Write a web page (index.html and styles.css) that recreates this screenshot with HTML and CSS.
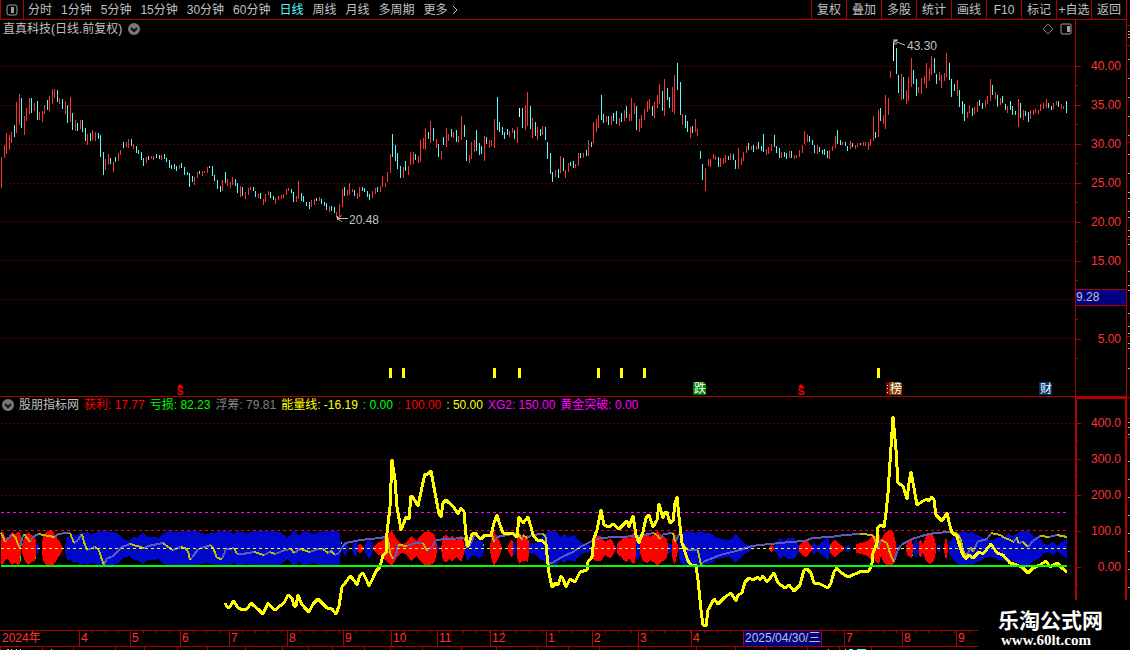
FILE: index.html
```html
<!DOCTYPE html>
<html lang="zh-CN">
<head>
<meta charset="utf-8">
<title>直真科技 日线</title>
<link rel="stylesheet" href="styles.css">
</head>
<body>
<div class="terminal">
  <header class="toolbar">
    <button class="panel-toggle" aria-label="侧栏">
      <svg width="12" height="12" viewBox="0 0 12 12"><rect x="1" y="1" width="10" height="10" rx="2" fill="none" stroke="#a0a0a0"/><path d="M5 3h3v6H5z" fill="#a0a0a0"/></svg>
    </button>
    <nav class="periods">
      <button>分时</button><button>1分钟</button><button>5分钟</button><button>15分钟</button><button>30分钟</button><button>60分钟</button><button class="active">日线</button><button>周线</button><button>月线</button><button>多周期</button><button class="more">更多<svg width="6" height="10" viewBox="0 0 6 10"><path d="M1 1l4 4-4 4" fill="none" stroke="#c0c0c0"/></svg></button>
    </nav>
    <nav class="tools">
      <button>复权</button><button>叠加</button><button>多股</button><button>统计</button><button>画线</button><button>F10</button><button>标记</button><button>+自选</button><button>返回</button>
    </nav>
  </header>

  <section class="pane price">
    <div class="plot">
      <div class="pane-title">
        <span>直真科技(日线.前复权)</span>
        <button class="round" aria-label="展开"><svg width="12" height="12" viewBox="0 0 12 12"><circle cx="6" cy="6" r="6" fill="#787878"/><path d="M3 5l3 3 3-3" fill="none" stroke="#101010" stroke-width="2"/></svg></button>
        <div class="title-icons">
          <svg width="12" height="12" viewBox="0 0 12 12"><path d="M6 1l5 5-5 5-5-5z" fill="none" stroke="#808080"/></svg>
          <svg width="12" height="12" viewBox="0 0 12 12"><rect x="1" y="1" width="10" height="10" rx="1" fill="none" stroke="#a0a0a0"/><path d="M7 3h3v6H7z" fill="#a0a0a0"/></svg>
        </div>
      </div>
      <svg class="canvas" viewBox="0 38 1075 358" preserveAspectRatio="none">
        <path class="grid" transform="translate(0 .5)" d="M1 66H1074M1 105H1074M1 144H1074M1 183H1074M1 221H1074M1 260H1074M1 299H1074M1 338H1074"/>
        <g transform="translate(.5 0)" shape-rendering="crispEdges">
          <path id="up" stroke="#ff3232"/>
          <path id="down" stroke="#54fcfc"/>
          <path stroke="#fff" d="M519 108V117M893 42V61"/>
        </g>
        <g class="callout">
          <path d="M337.500 218.500H348M337.500 218.500l4-3M337.500 218.500l4 3M337.500 216v4"/>
          <text x="349" y="224">20.48</text>
          <path d="M893.500 41l11.500 4M893 40h4M894 45v-4l4-1M895 44h2"/>
          <text x="907" y="50">43.30</text>
        </g>
        <path fill="#ff0" d="M389 368h3v10h-3zM402 368h3v10h-3zM493 368h3v10h-3zM518 368h3v10h-3zM597 368h3v10h-3zM620 368h3v10h-3zM643 368h3v10h-3zM877 368h3v10h-3z"/>
        <g class="dividend">
          <path d="M177 387l3-3 3 3zM798 387l3-3 3 3z"/>
          <text x="180" y="395">S</text><text x="801" y="395">S</text>
        </g>
        <g class="event">
          <path fill="#008000" d="M693 382h11l2 2v11h-13z"/><text x="700" y="393">跌</text>
          <path fill="#800000" d="M886 382h3v13h-3z"/><path d="M887 385h1v1h-1zM887 388h1v1h-1zM887 392h1v1h-1z" fill="#fff"/>
          <path fill="#804000" d="M889 382h11l2 2v11h-13z"/><text x="896" y="393">榜</text>
          <path fill="#003468" d="M1039 382h11l2 2v11h-13z"/><text x="1046" y="393">财</text>
        </g>
      </svg>
    </div>
    <ul class="scale">
      <li>40.00</li><li>35.00</li><li>30.00</li><li>25.00</li><li>20.00</li><li>15.00</li><li class="slot"><span class="cursor">9.28</span></li><li>5.00</li>
    </ul>
    <div class="edge"><svg viewBox="0 20 3 377" preserveAspectRatio="none"><path stroke="#b00000" d="M0 25.500h3M0 45.500h3M0 142.500h3M0 239.500h3M0 336.500h3"/><path stroke="#b0b0b0" d="M1 31.500h2M1 34.500h2M1 37.500h2M1 59.500h2M1 78.500h2M1 97.500h2M1 116.500h2M1 135.500h2M1 154.500h2M1 173.500h2M1 192.500h2M1 198.500h2M1 211.500h2M1 217.500h2M1 230.500h2M1 236.500h2M1 244.500h2M1 271.500h2M1 285.500h2M1 290.500h2M1 313.500h2M1 326.500h2M1 333.500h2M1 343.500h2M1 348.500h2M1 368.500h2"/></svg></div>
  </section>

  <section class="pane indicator">
    <div class="plot">
      <div class="legend">
        <button class="round" aria-label="指标"><svg width="12" height="12" viewBox="0 0 12 12"><circle cx="6" cy="6" r="6" fill="#787878"/><path d="M3 5l3 3 3-3" fill="none" stroke="#101010" stroke-width="2"/></svg></button>
        <span>股朋指标网</span><span class="red">获利: 17.77</span><span class="green">亏损: 82.23</span><span class="gray">浮筹: 79.81</span><span class="yellow">能量线: -16.19</span><span class="green">: 0.00</span><span class="red">: 100.00</span><span class="yellow">: 50.00</span><span class="magenta">XG2: 150.00</span><span class="magenta">黄金突破: 0.00</span>
      </div>
      <svg class="canvas" viewBox="0 413 1075 217" preserveAspectRatio="none">
        <path class="grid" transform="translate(0 .5)" d="M1 423H1074M1 459H1074M1 495H1074M1069 531H1074M1069 566H1074"/>
        <g shape-rendering="crispEdges">
          <path id="loss" fill="#0008cc"/>
          <path id="gain" fill="#f00"/>
          <path fill="#0f0" d="M20 556h1v5h-1zM35 557h1v2h-1zM341 542h1v2h-1zM483 544h1v2h-1zM830 546h1v2h-1zM912 554h1v2h-1z"/>
          <g transform="translate(0 .5)" stroke-dasharray="3 3">
            <path stroke="#f0f" d="M1 512H1067"/>
            <path stroke="#f00" d="M1 530H1067"/>
          </g>
          <path id="float" class="line" stroke="#5c5cc0"/>
          <path id="fall" class="line" stroke="#c0c000"/>
          <path transform="translate(0 .5)" stroke-dasharray="3 3" stroke="#ff0" d="M1 548H1067"/>
          <path id="energy" class="energy"/>
          <path fill="#0f0" d="M1 565H1067v2H1z"/>
          <path fill="#f0f" d="M390 566h1v1h-1zM410 566h1v1h-1zM443 566h1v1h-1zM461 566h1v1h-1zM601 566h1v1h-1zM659 566h1v1h-1zM674 566h1v1h-1zM888 566h1v1h-1zM946 566h1v1h-1z"/>
        </g>
      </svg>
    </div>
    <ul class="scale">
      <li>400.0</li><li>300.0</li><li>200.0</li><li>100.0</li><li>0.00</li>
    </ul>
    <div class="edge"><svg viewBox="0 397 3 233" preserveAspectRatio="none"><path stroke="#b00000" d="M0 397.500h3M0 418.500h3M0 437.500h3"/><path stroke="#b0b0b0" d="M1 422.500h2M1 427.500h2M1 434.500h2M1 461.500h2M1 479.500h2M1 497.500h2M1 515.500h2M1 533.500h2M1 551.500h2M1 569.500h2M1 587.500h2"/></svg></div>
  </section>

  <ol class="dates">
    <li>2024年</li><li>4</li><li>5</li><li>6</li><li>7</li><li>8</li><li>9</li><li>10</li><li>11</li><li>12</li><li>1</li><li>2</li><li>3</li><li>4</li><li class="picked"><time datetime="2025-04-30">2025/04/30/三</time></li><li>7</li><li>8</li><li>9</li>
  </ol>
  <svg class="next" viewBox="0 647 1130 3" preserveAspectRatio="none" shape-rendering="crispEdges">
    <path fill="#b00000" d="M0 647h1v3h-1zM42 647h1v3h-1zM73 647h1v3h-1zM115 647h1v3h-1zM144 647h1v3h-1zM177 647h1v3h-1zM207 647h1v3h-1zM245 647h1v3h-1zM282 647h1v3h-1zM308 647h1v3h-1zM332 647h1v3h-1zM364 647h1v3h-1zM390 647h1v3h-1zM422 647h1v3h-1zM461 647h1v3h-1zM496 647h1v3h-1zM537 647h1v3h-1zM568 647h1v3h-1zM599 647h1v3h-1zM638 647h1v3h-1zM696 647h1v3h-1zM735 647h1v3h-1zM766 647h1v3h-1zM807 647h1v3h-1zM839 647h1v3h-1zM871 647h1v3h-1z"/>
    <path fill="#c0c0c0" d="M7 649h2v1h-2zM11 649h1v1h-1zM16 649h1v1h-1zM20 649h1v1h-1zM51 649h1v1h-1zM828 649h1v1h-1z"/>
    <path fill="#54fcfc" d="M845 649h1v1h-1zM849 649h4v1h-4zM857 649h9v1h-9z"/>
  </svg>
  <div class="watermark"><strong>乐淘公式网</strong><b>www.60lt.com</b></div>
</div>
<script src="chart.js"></script>
</body>
</html>
```
FILE: styles.css
```css
* { box-sizing: border-box; }
body {
  margin: 0;
  background: #000;
  color: #c0c0c0;
  font: 12px/16px "Liberation Sans", "Noto Sans CJK SC", sans-serif;
}
button {
  margin: 0;
  padding: 0;
  border: 0;
  background: none;
  color: inherit;
  font: inherit;
  white-space: nowrap;
}
svg { display: block; }
ul, ol { margin: 0; padding: 0; list-style: none; }

.terminal {
  position: relative;
  display: flex;
  flex-direction: column;
  height: 100vh;
  min-height: 480px;
  overflow: hidden;
}

.toolbar {
  display: flex;
  flex: none;
  height: 20px;
  margin-right: 3px;
  border: solid #b00000;
  border-width: 0 1px 1px;
}
.panel-toggle {
  display: grid;
  place-items: center;
  width: 23px;
  border-right: 1px solid #b00000;
}
.periods { display: flex; gap: 9px; padding-left: 4px; }
.periods .active { color: #54fcfc; }
.periods .more { display: flex; align-items: center; gap: 4px; }
.tools { display: flex; margin-left: auto; }
.tools button { width: 35px; border-left: 1px solid #b00000; }

.pane {
  display: grid;
  grid-template-columns: minmax(0, 1fr) 52px 3px;
  min-height: 0;
}
.price { flex: 377 1 0; }
.indicator { flex: 233 1 0; }
.plot { display: flex; flex-direction: column; min-height: 0; }
.price .plot { border-bottom: 1px solid #b00000; }
.canvas { flex: 1 1 0; width: 100%; min-height: 0; }
.edge svg { width: 100%; height: 100%; }

.pane-title {
  display: flex;
  align-items: center;
  gap: 6px;
  height: 18px;
  padding: 0 3px;
}
.title-icons { display: flex; gap: 6px; margin-left: auto; }
.legend {
  display: flex;
  align-items: center;
  gap: 5px;
  height: 16px;
  padding-left: 2px;
  white-space: nowrap;
}
.red { color: #f00; }
.green { color: #0f0; }
.gray { color: #808080; }
.yellow { color: #ff0; }
.magenta { color: #f0f; }

.scale {
  color: #ff3232;
  text-align: right;
  border: solid #b00000;
}
.scale li { padding-right: 5px; background-repeat: no-repeat; background-image: linear-gradient(#b00000, #b00000), linear-gradient(#b00000, #b00000); }
.price .scale { padding-top: 27px; border-width: 0 1px 1px; }
.price .scale li {
  height: 39px;
  line-height: 39px;
  background-size: 5px 1px, 2px 1px;
  background-position: 0 19px, 0 38px;
}
.indicator .scale { padding-top: 6px; border-width: 2px 2px 0; }
.indicator .scale li {
  height: 36px;
  padding-right: 4px;
  line-height: 36px;
  background-size: 4px 1px, 1px 1px;
  background-position: 0 18px, 0 35px;
}
.price .scale .slot { padding: 8px 0 0; }
.cursor {
  display: block;
  height: 17px;
  border: solid #b00000;
  border-width: 1px 0;
  background: #000080;
  color: #c0c0c0;
  line-height: 15px;
  text-align: left;
}

.grid { stroke: #a00000; stroke-dasharray: 1 3; shape-rendering: crispEdges; }
.callout path { fill: none; stroke: #c0c0c0; }
.callout text { fill: #c0c0c0; }
.dividend { fill: #f00; font-size: 10px; font-weight: bold; text-anchor: middle; }
.event text { fill: #fff; text-anchor: middle; }
.line { fill: none; stroke-width: 2; }
.energy { fill: none; stroke: #ff0; stroke-width: 3; stroke-linejoin: round; }

.dates {
  display: grid;
  flex: none;
  grid-template-columns: 79fr 51fr 50fr 49fr 58fr 56fr 48fr 46fr 53fr 56fr 46fr 46fr 53fr 52fr 101fr 58fr 54fr 22fr 152fr;
  height: 17px;
  border: solid #b00000;
  border-width: 1px 0;
  color: #ff3232;
}
.dates li {
  min-width: 0;
  padding-left: 1px;
  border-left: 1px solid #b00000;
  line-height: 15px;
  white-space: nowrap;
  background: repeating-linear-gradient(90deg, transparent 0 12px, #b00000 12px 13px) 0 0 / 100% 2px no-repeat;
}
.dates li:first-child { border-left-color: transparent; background: none; }
.dates .picked { padding: 0; }
.picked time {
  display: inline-block;
  height: 15px;
  padding: 0 1px;
  border-right: 1px solid #b00000;
  background: #000080;
  color: #c0c0c0;
}
.next { flex: none; width: 100%; height: 3px; }

.watermark {
  position: absolute;
  right: 0;
  bottom: 0;
  display: flex;
  flex-direction: column;
  width: 152px;
  height: 50px;
  padding: 6px 0 0 20px;
  background: #000;
  color: #fff;
}
.watermark strong { font: bold 21px/26px "Noto Sans CJK SC", sans-serif; }
.watermark b { padding-left: 3px; font: bold 15px/16px "Liberation Serif", serif; }
```
FILE: chart.js
```js
// Daily bars: direction (r = up, c = down), x, high, low.
const bars = `
r1,157,188 r4,145,158 r6,133,154 r9,135,150 r11,132,143 c14,125,137 r16,102,133 r19,94,125 c21,98,128 r24,116,135
r26,108,121 r29,98,114 c31,98,113 r34,103,111 c37,101,120 r39,112,120 r42,111,122 r44,105,114 c47,100,110 r49,96,111
r52,89,104 r54,89,98 c57,90,102 r59,98,104 c62,99,109 r65,101,114 c67,105,123 r70,97,122 c72,113,130 r75,120,131
c77,123,131 r80,120,129 c82,120,132 c85,128,141 r87,134,145 c90,133,141 r92,130,140 r95,132,141 c98,133,139 c100,135,157
c103,152,175 r105,159,170 r108,154,165 c110,158,164 r113,162,172 c115,157,162 r118,153,161 r120,150,155 c123,142,148 r126,142,147
r128,139,148 c131,139,146 r133,144,149 c136,146,153 c138,150,154 c141,152,160 c143,158,166 r146,157,163 c148,156,160 r151,156,159
r153,156,160 c156,154,158 c159,155,159 r161,155,160 c164,154,159 c166,158,162 c169,160,168 c171,165,169 c174,164,169 c176,166,171
r179,165,169 c181,163,168 c184,167,175 c187,172,175 c189,173,187 c192,176,182 r194,177,185 r197,172,178 c199,171,174 r202,171,176
r204,171,173 r207,167,173 c209,166,168 c212,166,176 c214,175,181 c217,180,189 c220,186,192 r222,180,191 c225,172,183 r227,179,186
r230,182,188 r232,177,185 c235,179,186 c237,183,193 r240,186,197 c242,187,196 r245,192,199 r248,188,195 r250,187,190 c253,187,191
c255,191,197 r258,194,198 c260,193,199 r263,199,205 r265,194,202 r268,191,195 c270,192,198 c273,196,200 r275,198,204 r278,196,200
r281,195,199 r283,194,198 r286,189,195 r288,188,191 c291,189,193 c293,192,202 r296,196,202 r298,181,199 c301,193,201 c303,196,202
c306,202,206 c309,202,209 r311,200,207 r314,199,205 c316,198,201 r319,197,201 c321,199,204 c324,202,206 c326,203,210 r329,206,212
c331,206,211 c334,207,213 r336,212,218 r339,204,216 r342,189,207 c344,187,196 r347,190,196 r349,183,195 r352,189,192 c354,190,196
r357,193,199 r359,187,197 c362,187,191 c364,188,192 c367,191,197 c369,194,200 r372,191,198 r375,188,194 c377,187,192 r380,186,192
r382,176,187 r385,183,187 r387,172,182 r390,154,173 c392,134,157 c395,145,161 c397,153,169 c400,166,178 r403,167,178 c405,161,171
r408,166,175 r410,152,165 r413,152,164 c415,154,160 r418,156,163 r420,140,162 r423,138,149 r425,128,150 c428,132,139 r430,121,143
c433,128,141 r436,139,148 c438,144,157 r441,151,159 c443,137,145 r446,128,147 r448,134,141 c451,129,137 r453,132,138 c456,130,142
r458,136,143 r461,116,140 c464,125,137 c466,140,161 r469,155,163 r471,142,159 r474,140,152 c476,130,151 c479,143,155 c481,146,154
r484,136,161 c486,137,144 r489,140,148 r491,140,146 r494,119,148 c497,97,130 c499,122,132 c502,127,135 c504,132,139 c507,129,135
r509,131,137 r512,128,133 c514,130,139 r517,127,143 c522,108,128 r525,105,130 r527,92,126 c530,106,129 r532,118,138 c535,122,136
r537,127,140 c540,129,136 r542,126,135 c545,127,140 c547,142,159 c550,153,174 c552,172,182 r555,170,177 c558,169,178 r560,156,173
c563,158,171 r565,170,178 r568,163,172 c570,162,166 c573,161,168 r575,164,168 r578,153,166 c580,153,158 r583,153,158 c586,150,156
r588,140,156 c591,142,147 r593,122,143 r596,119,132 r598,115,128 c601,95,120 c603,114,123 r606,116,122 c608,116,125 r611,116,125
c613,113,121 c616,111,124 r619,118,126 c621,113,122 r624,110,121 c626,106,118 r629,114,121 r631,98,121 r634,103,114 c636,106,130
r639,119,132 r641,115,128 r644,109,120 r647,101,112 r649,99,109 c652,106,116 r654,102,118 r657,95,108 r659,84,104 c662,91,111
r664,79,116 c667,88,100 c669,97,108 r672,87,112 r674,75,114 c677,63,90 c680,82,115 r682,114,125 c685,115,128 c687,121,132
r690,127,138 c692,126,133 r695,119,132 r697,129,136 c700,151,159 c702,164,180 r705,168,191 r708,159,166 r710,159,167 r713,154,159
r715,156,160 c718,157,167 r720,158,167 r723,158,164 r725,155,163 c728,156,160 r730,153,160 c733,154,160 c735,160,169 r738,148,169
r741,158,165 r743,152,161 r746,146,153 c748,143,150 r751,146,150 c753,145,152 r756,146,150 c758,142,149 c761,146,151 c763,134,152
r766,149,155 r768,147,154 r771,144,151 c774,135,147 c776,146,153 c779,148,158 r781,152,158 c784,152,157 c786,153,159 r789,151,158
c791,151,158 r794,155,159 r796,155,158 r799,150,157 r802,145,153 r804,131,144 r807,134,142 c809,136,142 c812,140,145 c814,145,153
r817,145,154 c819,147,152 c822,150,154 c824,149,155 c827,151,158 r829,150,159 r832,146,151 r835,136,148 c837,130,144 c840,140,145
r842,142,145 c845,142,146 c847,146,151 r850,141,149 c852,143,147 r855,145,149 r857,143,147 c860,143,145 r863,142,146 r865,142,146
r868,142,150 r870,139,146 r873,116,141 c875,132,138 r878,110,137 c880,108,121 r883,115,124 r885,95,129 r888,98,115 r890,71,78
c896,48,74 c898,75,93 r901,74,100 c903,77,99 r906,90,104 r908,77,101 r911,58,87 c913,70,84 c916,79,96 r918,87,93
r921,78,94 r924,76,84 r926,63,88 r929,68,81 r931,56,75 c934,58,73 c936,74,84 r939,72,81 r941,75,88 r944,73,81
r946,53,77 c949,63,80 c951,79,97 c954,84,91 r957,80,96 c959,90,107 c962,101,114 c964,104,121 r967,112,118 r969,105,113
c972,108,116 r974,107,114 r977,102,112 c979,100,106 c982,103,109 r985,100,107 r987,96,104 r990,79,101 c992,85,95 r995,92,99
c997,95,107 r1000,98,105 c1002,96,103 c1005,104,110 r1007,106,113 c1010,101,110 c1012,106,115 c1015,111,115 r1018,99,127 c1020,103,118
r1023,110,120 c1025,111,116 c1028,112,122 r1030,110,119 r1033,110,115 r1035,109,113 r1038,110,114 r1040,104,111 r1043,103,109 r1046,99,108
c1048,103,108 c1051,106,110 r1053,103,109 r1056,101,105 c1058,101,107 r1061,104,109 r1063,106,109 c1066,101,113`;

const barPath = kind => bars.trim().split(/\s+/).filter(b => b[0] === kind)
  .map(b => b.slice(1).split(',')).map(([x, hi, lo]) => `M${x} ${hi}V${lo}`).join('');

// Chip bands: x,half-height pairs, mirrored around the 50 line.
const loss = [
  '36,0 37,5 38,6 40,0',
  '65,0 66,8 68,12 71,10 73,14 77,13 80,16 84,15 87,16 91,14 95,15 99,17 105,17 111,16 117,15 122,10 126,8 129,7 133,11 137,11 140,13 143,15 148,11 153,11 158,10 163,14 168,17 176,16 184,17 197,17 201,15 207,14 213,15 220,17 229,17 234,14 238,17 247,15 253,17 263,17 272,17 280,16 284,13 287,10 290,12 293,17 296,17 299,12 302,16 306,17 313,14 320,16 325,17 337,17 340,14 341,0',
  '342,0 344,7 346,5 349,0', '352,0 354,6 356,7 359,0', '365,0 368,10 370,8 373,0', '364,0 367,7 369,10 371,7 374,0',
  '437,4 440,0', '464,3 468,12 471,7 475,7 479,10 481,7 483,8 484,0', '513,6 515,4 517,0', '529,5 532,5 534,0',
  '533,4 537,8 542,11 545,14 548,17 553,17 558,15 560,11 564,14 567,11 572,12 575,13 578,8 582,5 587,3 592,2 594,0',
  '615,4 617,0', '635,9 638,12 641,3', '668,5 672,3',
  '679,9 681,14 684,16 690,17 695,15 700,17 707,15 712,14 717,10 722,9 728,8 732,9 735,14 740,9 743,6 748,3 755,0',
  '774,2 777,5 780,10 784,7 788,10 793,10 797,6 799,2', '812,3 814,6 817,2 822,6 827,10 829,8 830,2', '845,1 848,4 851,0',
  '896,5 899,0', '913,3 916,9 919,2', '937,2 939,4 941,0',
  '949,5 953,10 957,15 963,17 968,15 972,16 975,14 980,12 985,9 988,8 993,8 998,11 1005,12 1008,15 1012,12 1017,14 1020,17 1028,17 1032,13 1038,10 1043,5 1048,3 1053,6 1057,2 1062,6 1067,10'
];
const gain = [
  '1,15 3,17 5,11 7,10 9,12 12,16 15,14 17,16 19,16 21,12 21,0', '22,3 25,13 29,16 32,12 34,13 36,8 36,0',
  '42,5 44,14 48,17 53,17 57,10 60,6 63,0', '358,3 360,5 364,0', '373,1 377,5 382,7 385,11 388,14 392,17 395,12 398,7 402,4 405,5 408,7 411,12 415,8 417,7 420,12 423,15 428,17 432,15 435,12 437,3',
  '441,0 443,12 446,13 449,10 452,13 455,9 457,8 461,13 464,5 465,0', '490,2 492,12 494,17 497,12 500,6 502,0', '508,2 511,8 513,7 513,0',
  '517,8 519,15 522,12 525,12 528,13 529,3', '592,7 595,12 599,12 602,11 605,6 610,9 612,8 615,2', '617,5 622,8 623,11 627,13 629,9 633,15 635,14 636,3',
  '640,4 643,12 647,14 650,11 653,13 657,17 660,14 663,12 667,9 668,2', '672,8 675,16 677,6 679,0', '769,0 771,3 774,0',
  '799,2 802,6 806,8 809,5 812,1', '830,3 835,9 838,5 843,2 844,0', '856,4 862,5 867,7 872,11 874,9 877,14 879,15 881,7 884,14 888,18 893,17 896,5',
  '906,2 908,7 910,8 912,9 913,0', '919,7 921,8 923,3 926,12 930,15 934,11 936,3', '944,2 946,11 948,2'
];
const bandPath = list => list.map(shape => {
  const pts = shape.split(' ').map(p => p.split(',').map(Number));
  const top = pts.map(([x, h]) => `${x} ${548 - h}`);
  const bottom = pts.map(([x, h]) => `${x} ${549 + h}`).reverse();
  return `M${top.concat(bottom).join('L')}Z`;
}).join('');

const float = '1,533 2,534 5,542 9,537 12,535 15,536 18,544 20,548 22,538 24,534 27,538 30,542 32,538 36,535 39,534 48,536 55,537 58,534 66,533 70,533 72,538 74,543 78,540 82,534 84,542 87,550 95,547 99,550 102,560 104,565 107,558 112,557 117,552 122,547 130,544 137,546 144,548 148,546 163,543 168,547 173,550 181,547 185,548 188,551 190,560 194,555 198,549 205,547 211,545 214,550 217,558 222,559 226,549 230,549 234,548 237,554 243,554 248,553 254,552 264,555 270,552 275,554 285,550 291,549 294,553 300,549 310,552 318,549 323,549 328,553 331,551 335,555 339,553 342,547 346,543 360,540 380,538 385,537 388,538 390,553 393,559 396,555 398,545 407,546 415,543 423,543 427,551 432,547 436,540 447,539 465,538 467,548 470,545 475,534 480,538 492,534 494,542 497,537 507,535 518,533 522,540 523,535 527,538 532,535 543,534 546,537 548,563 552,563 562,557 573,552 580,547 590,542 600,538 617,537 640,536 653,533 657,535 660,539 663,534 673,533 675,542 680,533 682,542 687,550 698,550 701,565 703,562 720,555 740,550 752,546 770,544 790,542 805,541 812,538 830,537 845,535 860,534 873,535 878,548 881,540 887,543 889,550 892,558 894,562 897,552 901,545 912,539 925,535 935,533 950,532 957,533 961,540 963,550 966,556 968,553 971,547 973,552 978,541 985,540 988,538 991,533 1000,535 1005,538 1010,540 1014,542 1017,537 1018,543 1023,542 1028,547 1033,541 1040,536 1049,537 1057,535 1067,537'
  .split(' ').map(p => p.split(',').map(Number));
const energy = '225,603 227,607 230,607 233,601 235,603 238,608 243,610 247,609 251,603 254,606 258,609 263,614 268,603 271,607 275,610 280,606 284,603 288,595 292,598 294,606 296,606 298,595 301,603 305,608 309,612 313,604 318,599 323,604 327,608 332,609 336,614 339,606 342,587 346,582 350,576 353,579 357,585 360,575 363,573 367,581 369,586 373,578 376,571 380,567 383,555 386,553 387,533 390,507 392,460 395,480 397,507 401,530 403,525 406,517 409,519 411,496 414,499 418,506 422,487 425,474 428,474 431,471 433,482 436,498 439,514 441,517 443,503 446,500 449,503 453,506 458,514 461,508 464,512 466,535 468,546 472,534 476,533 478,537 481,539 485,535 491,536 494,523 497,515 500,525 503,533 512,533 517,537 519,517 523,523 528,517 531,527 533,535 537,540 543,541 546,545 547,555 549,573 552,587 556,583 558,585 561,576 563,579 566,587 570,579 575,582 580,572 587,570 588,562 592,557 594,538 597,530 601,510 604,525 609,527 613,524 619,529 627,521 629,527 633,516 636,535 639,543 643,532 646,518 649,515 653,527 657,520 659,504 663,518 665,512 667,512 670,523 673,521 675,503 677,497 679,517 682,543 685,552 688,561 692,566 696,565 698,580 701,610 703,625 706,626 708,610 714,599 718,604 725,597 731,593 736,601 738,595 742,593 745,582 749,578 753,580 758,577 760,580 763,576 767,582 774,573 778,583 785,588 789,585 794,591 800,585 804,570 807,569 811,573 814,583 820,584 828,588 831,583 834,572 837,568 840,572 848,577 855,574 862,571 869,571 872,563 873,553 877,543 878,527 881,525 884,527 886,513 888,493 891,447 893,417 896,450 898,483 903,486 907,499 909,483 911,472 914,488 917,505 923,501 927,499 929,501 932,497 934,500 936,515 942,521 947,513 949,522 952,533 957,536 960,547 963,555 966,559 969,555 973,558 979,552 983,554 991,544 997,553 1003,555 1010,563 1017,565 1023,568 1028,573 1033,568 1040,565 1046,561 1050,567 1057,563 1063,569 1067,572'
  .split(' ').map(p => p.split(',').map(Number));

const segments = test => float.slice(1).map((p, i) => [float[i], p]).filter(([a, b]) => test(b[1] > a[1]))
  .map(([a, b]) => `M${a}L${b}`).join('');
const draw = (id, d) => document.getElementById(id).setAttribute('d', d);

draw('up', barPath('r'));
draw('down', barPath('c'));
draw('loss', bandPath(loss));
draw('gain', bandPath(gain));
draw('float', segments(falling => !falling));
draw('fall', segments(falling => falling));
draw('energy', 'M' + energy.join('L'));
```
